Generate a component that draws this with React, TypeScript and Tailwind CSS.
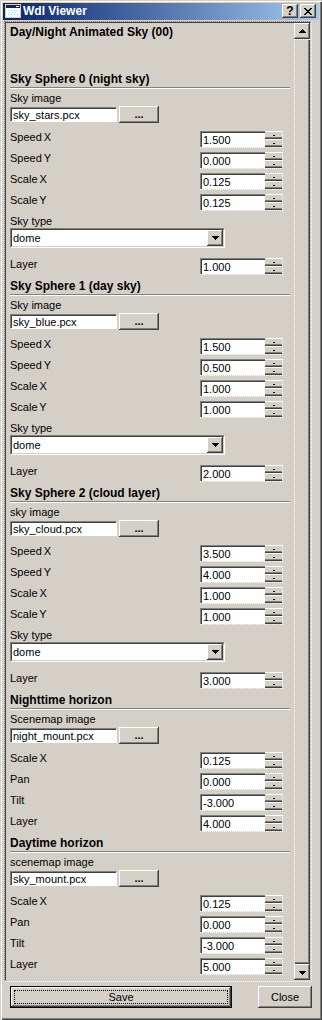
import React from "react";

const Raised = "shadow-[inset_-1px_-1px_0_#404040,inset_1px_1px_0_#ffffff,inset_-2px_-2px_0_#808080]";

function DownTri() {
  return (
    <svg width="7" height="4" viewBox="0 0 7 4" shapeRendering="crispEdges">
      <path d="M0 0h7v1H0z M1 1h5v1H1z M2 2h3v1H2z M3 3h1v1H3z" fill="#000" />
    </svg>
  );
}
function UpTri() {
  return (
    <svg width="7" height="4" viewBox="0 0 7 4" shapeRendering="crispEdges">
      <path d="M3 0h1v1H3z M2 1h3v1H2z M1 2h5v1H1z M0 3h7v1H0z" fill="#000" />
    </svg>
  );
}

function SpinBtn() {
  return (
    <div className="h-[8px] border-t border-white border-b border-b-[#404040] shadow-[inset_0_-1px_0_#808080] flex items-center justify-center bg-[#D4D0C8]">
      <div className="w-[2px] h-[1px] bg-black" />
    </div>
  );
}

function Spin({ v }: { v: string }) {
  return (
    <div className="w-[83px] h-[17px] mr-[7px] flex border-r border-b border-dotted border-white">
      <div className="w-[65px] border-t border-l border-[#808080] flex">
        <div className="flex-1 border-t border-l border-[#404040] bg-white leading-[14px] pl-[1px] text-[11px] text-black">
          {v}
        </div>
      </div>
      <div className="flex-1 flex flex-col">
        <SpinBtn />
        <SpinBtn />
      </div>
    </div>
  );
}

function SpinRow({ label, v }: { label: string; v: string }) {
  return (
    <div className="h-[21px] flex items-start">
      <div className="flex-1 leading-[13px] [word-spacing:-1px]">{label}</div>
      <Spin v={v} />
    </div>
  );
}

function Heading({ t }: { t: string }) {
  return (
    <>
      <div className="h-[15px] leading-[14px] text-[12px] font-bold">{t}</div>
      <div className="h-[2px] border-t border-[#808080] border-b border-b-white border-b-dotted" />
    </>
  );
}

function FileRow({ label, file }: { label: string; file: string }) {
  return (
    <>
      <div className="mt-[3px] h-[13px] leading-[13px]">{label}</div>
      <div className="mt-[1px] h-[17px] flex items-center gap-[2px]">
        <div className="w-[107px] h-[15px] border-t border-l border-[#808080] border-r border-b border-r-white border-b-white">
          <div className="h-full border-t border-l border-[#404040] bg-white leading-[12px] pl-[1px]">{file}</div>
        </div>
        <div className={`w-[40px] h-[17px] bg-[#D4D0C8] ${Raised} flex items-center justify-center font-bold leading-[14px] pb-[1px]`}>
          ...
        </div>
      </div>
    </>
  );
}

function Combo() {
  return (
    <div className="w-[215px] h-[20px] border-t border-l border-[#808080] border-r border-b border-r-white border-b-white">
      <div className="h-full border-t border-l border-[#404040] border-r border-b border-r-[#D4D0C8] border-b-[#D4D0C8] bg-white flex">
        <div className="flex-1 pl-[1px] leading-[16px]">dome</div>
        <div className={`w-[16px] h-[16px] bg-[#D4D0C8] ${Raised} flex items-center justify-center`}>
          <DownTri />
        </div>
      </div>
    </div>
  );
}

type Sphere = { title: string; img: string; file: string; vals: string[]; layer: string };

const spheres: Sphere[] = [
  { title: "Sky Sphere 0 (night sky)", img: "Sky image", file: "sky_stars.pcx", vals: ["1.500", "0.000", "0.125", "0.125"], layer: "1.000" },
  { title: "Sky Sphere 1 (day sky)", img: "Sky image", file: "sky_blue.pcx", vals: ["1.500", "0.500", "1.000", "1.000"], layer: "2.000" },
  { title: "Sky Sphere 2 (cloud layer)", img: "sky image", file: "sky_cloud.pcx", vals: ["3.500", "4.000", "1.000", "1.000"], layer: "3.000" },
];

const horizons = [
  { title: "Nighttime horizon", img: "Scenemap image", file: "night_mount.pcx", vals: ["0.125", "0.000", "-3.000", "4.000"] },
  { title: "Daytime horizon", img: "scenemap image", file: "sky_mount.pcx", vals: ["0.125", "0.000", "-3.000", "5.000"] },
];

function SphereSection({ s }: { s: Sphere }) {
  const labels = ["Speed X", "Speed Y", "Scale X", "Scale Y"];
  return (
    <div className="flex flex-col">
      <Heading t={s.title} />
      <FileRow label={s.img} file={s.file} />
      <div className="mt-[8px]">
        {labels.map((l, i) => (
          <SpinRow key={l} label={l} v={s.vals[i]} />
        ))}
      </div>
      <div className="h-[13px] leading-[13px]">Sky type</div>
      <Combo />
      <div className="mt-[10px]">
        <SpinRow label="Layer" v={s.layer} />
      </div>
    </div>
  );
}

function HorizonSection({ h }: { h: { title: string; img: string; file: string; vals: string[] } }) {
  const labels = ["Scale X", "Pan", "Tilt", "Layer"];
  return (
    <div className="flex flex-col">
      <Heading t={h.title} />
      <FileRow label={h.img} file={h.file} />
      <div className="mt-[8px]">
        {labels.map((l, i) => (
          <SpinRow key={l} label={l} v={h.vals[i]} />
        ))}
      </div>
    </div>
  );
}

export default function App() {
  return (
    <div className="w-[322px] h-[1020px] bg-[#D4D0C8] p-[3px] flex flex-col text-[11px] text-black font-['Liberation_Sans',Arial,sans-serif] shadow-[inset_1px_1px_0_#D4D0C8,inset_2px_2px_0_#ffffff,inset_-1px_-1px_0_#404040,inset_-2px_-2px_0_#808080]">
      {/* Title bar */}
      <div className="h-[17px] bg-linear-to-r from-[#0A246A] to-[#A6CAF0] flex items-start pt-[1px] pl-[2px] pr-[3px]">
        <svg width="16" height="14" viewBox="0 0 16 14" shapeRendering="crispEdges">
          <rect x="0.5" y="0.5" width="15" height="13" fill="#ffffff" stroke="#D4D0C8" />
          <rect x="1" y="1" width="14" height="3" fill="#0A246A" />
          <rect x="11" y="2" width="3" height="1" fill="#ffffff" />
          <path d="M3 6h1v1H3z M6 6h1v1H6z M9 6h1v1H9z M12 6h1v1H12z M4 8h1v1H4z M7 8h1v1H7z M10 8h1v1H10z M3 10h1v1H3z M6 10h1v1H6z M9 10h1v1H9z M12 10h1v1H12z" fill="#A6CAF0" />
        </svg>
        <div className="ml-[2px] text-white font-bold text-[12px] leading-[15px]">Wdl Viewer</div>
        <div className="flex-1" />
        <div className={`w-[16px] h-[14px] bg-[#D4D0C8] ${Raised} flex items-center justify-center font-bold text-[12px] leading-[12px]`}>
          ?
        </div>
        <div className={`ml-[2px] w-[16px] h-[14px] bg-[#D4D0C8] ${Raised} flex items-center justify-center`}>
          <svg width="8" height="7" viewBox="0 0 8 7" shapeRendering="crispEdges">
            <path d="M0 0h2v1H0z M6 0h2v1H6z M1 1h2v1H1z M5 1h2v1H5z M2 2h4v1H2z M3 3h2v1H3z M2 4h4v1H2z M1 5h2v1H1z M5 5h2v1H5z M0 6h2v1H0z M6 6h2v1H6z" fill="#000" />
          </svg>
        </div>
      </div>

      {/* Panel */}
      <div className="mt-[1px] ml-[1px] w-[308px] h-[961px] border-t border-l border-[#808080] border-r border-b border-r-white border-b-white border-dotted">
        <div className="w-full h-full border-t border-l border-solid border-[#404040] border-r border-b border-r-[#D4D0C8] border-b-[#D4D0C8] flex">
          <div className="flex-1 pl-[4px] pr-[4px] pt-[2px] flex flex-col overflow-hidden">
            <div className="h-[14px] leading-[14px] text-[12px] font-bold">Day/Night Animated Sky (00)</div>
            <div className="h-[33px]" />
            {spheres.map((s) => (
              <SphereSection key={s.title} s={s} />
            ))}
            {horizons.map((h) => (
              <HorizonSection key={h.title} h={h} />
            ))}
          </div>
          {/* Scrollbar */}
          <div className="w-[16px] flex flex-col">
            <div className={`h-[16px] bg-[#D4D0C8] ${Raised} flex items-center justify-center`}>
              <UpTri />
            </div>
            <div className="flex-1 border-t border-l border-dotted border-white">
              <div className="h-full border-r border-b border-solid border-[#404040] shadow-[inset_-1px_-1px_0_#808080]" />
            </div>
            <div className={`h-[16px] bg-[#D4D0C8] ${Raised} flex items-center justify-center pt-[1px]`}>
              <DownTri />
            </div>
          </div>
        </div>
      </div>

      {/* Buttons */}
      <div className="mt-[4px] flex pl-[7px]">
        <div className="w-[222px] h-[22px] border border-black">
          <div className={`w-full h-full bg-[#D4D0C8] ${Raised} p-[3px]`}>
            <div className="w-full h-full border border-dotted border-black flex items-center justify-center leading-[12px]">
              Save
            </div>
          </div>
        </div>
        <div className={`ml-[26px] w-[54px] h-[22px] bg-[#D4D0C8] ${Raised} flex items-center justify-center`}>
          Close
        </div>
      </div>
    </div>
  );
}
